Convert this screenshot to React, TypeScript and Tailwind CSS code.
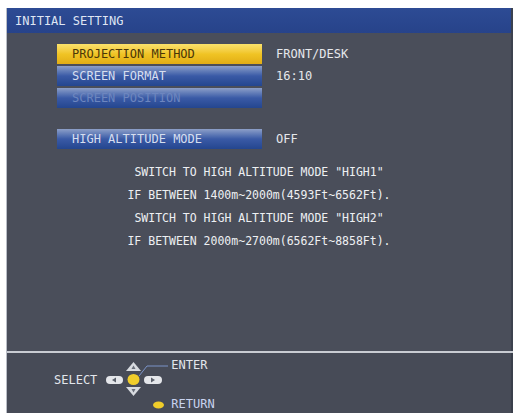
import React from "react";

const font = "font-['DejaVu_Sans_Mono','Liberation_Mono',monospace]";

export default function App() {
  // menu rows on the left, values on the right
  const rows = [
    { label: "PROJECTION METHOD", value: "FRONT/DESK", state: "active" },
    { label: "SCREEN FORMAT", value: "16:10", state: "normal" },
    { label: "SCREEN POSITION", value: "", state: "disabled" },
  ];

  const notes = [
    'SWITCH TO HIGH ALTITUDE MODE "HIGH1"',
    "IF BETWEEN 1400m~2000m(4593Ft~6562Ft).",
    'SWITCH TO HIGH ALTITUDE MODE "HIGH2"',
    "IF BETWEEN 2000m~2700m(6562Ft~8858Ft).",
  ];

  const barClass = (state: string) =>
    state === "active"
      ? "bg-linear-to-b from-[#fbe26a] via-[#f0c424] to-[#e2ad14] text-[#4a3608]"
      : state === "disabled"
        ? "bg-linear-to-b from-[#8d9fc8] via-[#3a5aa6] to-[#24468f] text-[#6d86bf]"
        : "bg-linear-to-b from-[#8d9fc8] via-[#3a5aa6] to-[#24468f] text-[#d6deef]";

  return (
    <div className={`w-[517px] h-[417px] bg-white pt-2 pl-[6px] ${font}`}>
      <div className="flex flex-col w-[507px] h-[405px] border-l border-[#b9bdc6]">
        {/* title bar */}
        <div className="h-[25px] flex items-center pl-[8px] bg-linear-to-b from-[#2d4b94] to-[#27438a] border-r-2 border-[#3a4150]">
          <span className="text-[12px] leading-none text-[#dfe5f3]">INITIAL SETTING</span>
        </div>

        {/* body */}
        <div className="h-[318px] bg-[#4a4e5a] pt-[11px] border-r-2 border-[#3d424e]">
          <div className="flex flex-col gap-[2px]">
            {rows.map((r) => (
              <div key={r.label} className="flex items-center h-[20px]">
                <div
                  className={`ml-[50px] w-[205px] h-[20px] flex items-center pl-[15px] text-[12px] leading-none ${barClass(r.state)}`}
                >
                  {r.label}
                </div>
                <span className="ml-[14px] text-[12px] leading-none text-[#e6e8ec]">{r.value}</span>
              </div>
            ))}
          </div>

          <div className="flex items-center h-[20px] mt-[21px]">
            <div className={`ml-[50px] w-[205px] h-[20px] flex items-center pl-[15px] text-[12px] leading-none ${barClass("normal")}`}>
              HIGH ALTITUDE MODE
            </div>
            <span className="ml-[14px] text-[12px] leading-none text-[#e6e8ec]">OFF</span>
          </div>

          <div className="flex flex-col items-center mt-[16px] gap-[7px]">
            {notes.map((n) => (
              <div key={n} className="h-[16px] flex items-center text-[11.5px] leading-none text-[#eef0f3]">
                {n}
              </div>
            ))}
          </div>
        </div>

        {/* divider */}
        <div className="h-[2px] bg-[#c9ccd3]" />

        {/* guide panel */}
        <div className="h-[60px] bg-[#474b57] flex items-center pl-[47px] border-r-2 border-[#3a3f4b]">
          <span className="text-[12px] leading-none text-[#e3e6ec] mb-[6px]">SELECT</span>
          <div className="relative ml-[4px] w-[130px] h-[60px]">
            <svg className="absolute inset-0" width="130" height="60" viewBox="0 0 130 60">
              {/* up */}
              <path d="M25 18 L32.5 9 L40 18 Z" fill="#d8dbe0" />
              <path d="M30.5 16 L32.5 12.5 L34.5 16 Z" fill="#6a6f7a" />
              {/* down */}
              <path d="M25 34 L40 34 L32.5 43 Z" fill="#d8dbe0" />
              <path d="M30.5 36 L34.5 36 L32.5 39.5 Z" fill="#6a6f7a" />
              {/* left */}
              <rect x="5" y="23" width="17" height="8" rx="4" fill="#e4e6ea" />
              <path d="M15 24.5 L11 27 L15 29.5 Z" fill="#5a5f6a" />
              {/* right */}
              <rect x="43" y="23" width="18" height="8" rx="4" fill="#e4e6ea" />
              <path d="M50 24.5 L54 27 L50 29.5 Z" fill="#5a5f6a" />
              {/* enter */}
              <ellipse cx="32.5" cy="26.5" rx="6" ry="5.5" fill="#f0cd2a" />
              <path d="M38 23 L46 13 L67 13" stroke="#7b93c8" strokeWidth="1" fill="none" />
              {/* return */}
              <ellipse cx="57.5" cy="52" rx="5.5" ry="3.5" fill="#f0cd2a" />
            </svg>
            <span className="absolute left-[70px] top-[6px] text-[12px] leading-none text-[#e3e6ec]">ENTER</span>
            <span className="absolute left-[70px] top-[45px] text-[12px] leading-none text-[#c9d3ef]">RETURN</span>
          </div>
        </div>
      </div>
    </div>
  );
}
